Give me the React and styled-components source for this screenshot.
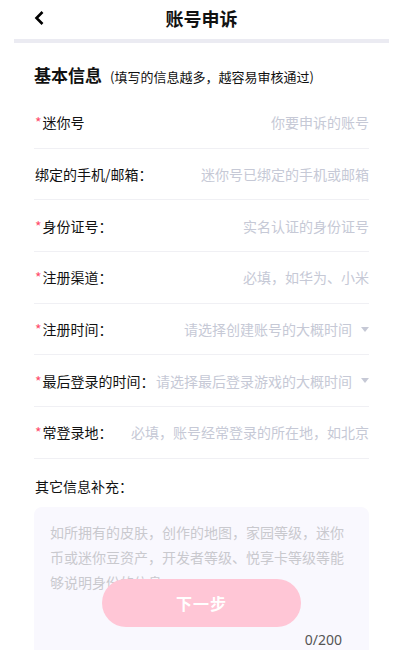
import React from 'react'
import styled, { createGlobalStyle } from 'styled-components'

const GlobalStyle = createGlobalStyle`
  body {
    margin: 0;
    background: #fff;
    font-family: "Noto Sans CJK SC", "Noto Sans", sans-serif;
    color: #111;
  }
  * { box-sizing: border-box; }
`

const Page = styled.div`
  width: 375px;
  margin-left: 14px;
`

const Header = styled.header`
  height: 43px;
  padding-bottom: 4px;
  display: flex;
  align-items: center;
  justify-content: center;
  position: relative;
  border-bottom: 4px solid #ebebf2;
`

const BackButton = styled.button`
  position: absolute;
  left: 18px;
  top: 9px;
  width: 14px;
  height: 18px;
  padding: 0;
  border: none;
  background: none;
  display: flex;
  align-items: center;
  justify-content: center;
`

const Title = styled.h1`
  margin: 0;
  font-size: 18px;
  font-weight: 700;
  line-height: 24px;
`

const Content = styled.main`
  padding: 20px 20px 0;
`

const SectionTitle = styled.div`
  display: flex;
  align-items: baseline;
  gap: 8px;
  height: 24px;
  margin-bottom: 10px;
`

const SectionName = styled.span`
  font-size: 17px;
  font-weight: 700;
  line-height: 24px;
`

const SectionHint = styled.span`
  font-size: 13px;
  line-height: 24px;
  color: #111;
`

const Row = styled.div`
  display: flex;
  align-items: center;
  gap: 4px;
  min-height: 51.7px;
  border-bottom: 1px solid #f0f0f4;
`

const Label = styled.label`
  flex-shrink: 0;
  font-size: 14px;
  line-height: 20px;
  white-space: nowrap;
  padding-left: 1px;
`

const Star = styled.span`
  color: #ff4d6d;
  margin-right: 1px;
`

const Field = styled.input`
  flex: 1;
  min-width: 0;
  border: none;
  outline: none;
  background: transparent;
  padding: 0;
  text-align: right;
  font: inherit;
  font-size: 14px;
  line-height: 20px;
  color: #111;
  &::placeholder { color: #c6c9d6; }
`

const Picker = styled.div`
  flex: 1;
  min-width: 0;
  display: flex;
  align-items: center;
  justify-content: flex-end;
  gap: 9px;
  font-size: 14px;
  line-height: 20px;
  color: #c6c9d6;
  white-space: nowrap;
`

const Caret = styled.span`
  flex-shrink: 0;
  width: 0;
  height: 0;
  border-left: 4px solid transparent;
  border-right: 4px solid transparent;
  border-top: 5px solid #c6c9d6;
`

const ExtraLabel = styled.div`
  font-size: 14px;
  line-height: 20px;
  margin-top: 17px;
  margin-bottom: 11px;
  padding-left: 1px;
`

const NoteBox = styled.div`
  background: #f9f8fe;
  border-radius: 8px;
  padding: 13px 20px 10px 16px;
`

const NoteArea = styled.textarea`
  display: block;
  width: 100%;
  height: 110px;
  border: none;
  outline: none;
  resize: none;
  background: transparent;
  padding: 0;
  font: inherit;
  font-size: 14px;
  line-height: 25px;
  color: #111;
  &::placeholder { color: #c9c9ce; }
`

const Counter = styled.div`
  text-align: right;
  padding-right: 7px;
  font-family: "Noto Sans", "Noto Sans CJK SC", sans-serif;
  font-size: 14px;
  line-height: 20px;
  color: #555;
`

const NextButton = styled.button`
  position: fixed;
  bottom: 23px;
  left: 102px;
  width: 199px;
  height: 48px;
  border: none;
  border-radius: 24px;
  background: #ffc6d6;
  color: #fff;
  font-family: "Noto Sans CJK SC", sans-serif;
  font-size: 16px;
  font-weight: 700;
  letter-spacing: 1px;
`

const fields = [
  { label: '迷你号', required: true, placeholder: '你要申诉的账号' },
  { label: '绑定的手机/邮箱：', placeholder: '迷你号已绑定的手机或邮箱' },
  { label: '身份证号：', required: true, placeholder: '实名认证的身份证号' },
  { label: '注册渠道：', required: true, placeholder: '必填，如华为、小米' },
  { label: '注册时间：', required: true, picker: '请选择创建账号的大概时间' },
  { label: '最后登录的时间：', required: true, picker: '请选择最后登录游戏的大概时间' },
  { label: '常登录地：', required: true, placeholder: '必填，账号经常登录的所在地，如北京' },
]

export default function App() {
  return (
    <Page>
      <GlobalStyle />
      <Header>
        <BackButton aria-label="返回">
          <svg width="10" height="14" viewBox="0 0 10 14">
            <polyline points="8.5,1 2.5,7 8.5,13" fill="none" stroke="#000" strokeWidth="2.6" />
          </svg>
        </BackButton>
        <Title>账号申诉</Title>
      </Header>
      <Content>
        <SectionTitle>
          <SectionName>基本信息</SectionName>
          <SectionHint>(填写的信息越多，越容易审核通过)</SectionHint>
        </SectionTitle>
        {fields.map((f, i) => (
          <Row key={i}>
            <Label>
              {f.required && <Star>*</Star>}
              {f.label}
            </Label>
            {f.picker ? (
              <Picker>
                {f.picker}
                <Caret />
              </Picker>
            ) : (
              <Field placeholder={f.placeholder} />
            )}
          </Row>
        ))}
        <ExtraLabel>其它信息补充：</ExtraLabel>
        <NoteBox>
          <NoteArea placeholder="如所拥有的皮肤，创作的地图，家园等级，迷你币或迷你豆资产，开发者等级、悦享卡等级等能够说明身份的信息" />
          <Counter>0/200</Counter>
        </NoteBox>
      </Content>
      <NextButton>下一步</NextButton>
    </Page>
  )
}
